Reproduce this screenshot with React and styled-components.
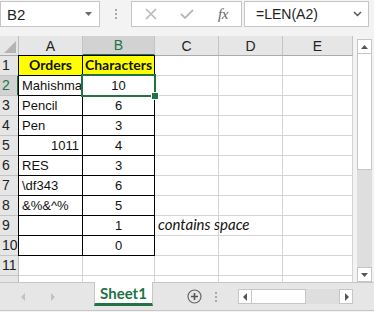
import React from "react";
import styled, { createGlobalStyle, css } from "styled-components";

const GREEN = "#217346";

const GlobalStyle = createGlobalStyle`
  html, body { margin: 0; padding: 0; }
  body {
    background: #f3f3f3;
    font-family: "Liberation Sans", Arial, sans-serif;
  }
`;

const Window = styled.div`
  width: 374px;
  height: 312px;
  overflow: hidden;
  display: flex;
  flex-direction: column;
  background: #f3f3f3;
`;

/* ---------- formula bar ---------- */
const FormulaBar = styled.div`
  height: 36px;
  box-sizing: border-box;
  padding-top: 1px;
  display: flex;
  align-items: flex-start;
`;

const Field = styled.div`
  height: 26px;
  box-sizing: border-box;
  border: 1px solid #c6c6c6;
  background: #fff;
  display: flex;
  align-items: center;
`;

const NameBox = styled(Field)`
  width: 100px;
  padding: 0 6px 0 6px;
  justify-content: space-between;
  font-size: 15px;
  color: #222;
`;

const Grip = styled.div`
  width: 31px;
  height: 26px;
  display: flex;
  flex-direction: column;
  align-items: center;
  justify-content: center;
  gap: 2px;
  span {
    width: 2px;
    height: 2px;
    background: #a8a8a8;
  }
`;

const EditBox = styled(Field)`
  width: 111px;
  padding-left: 12px;
  gap: 22px;
`;

const IconSlot = styled.div`
  width: 14px;
  display: flex;
  justify-content: center;
  align-items: center;
`;

const Fx = styled.span`
  font-family: "Liberation Serif", serif;
  font-style: italic;
  font-size: 15px;
  color: #666;
  letter-spacing: -0.5px;
`;

const FormulaInput = styled(Field)`
  flex: 1;
  margin: 0 5px 0 2px;
  padding: 0 6px 0 11px;
  justify-content: space-between;
  font-size: 14px;
  color: #222;
`;

/* ---------- sheet ---------- */
const SheetArea = styled.div`
  height: 246px;
  display: flex;
`;

const Grid = styled.div`
  width: 353px;
  height: 246px;
  overflow: hidden;
  background: #fff;
  display: grid;
  grid-template-columns: 19px 64px 72px 64px 64px 70px;
  grid-auto-rows: 20px;
`;

const Corner = styled.div`
  background: #e6e6e6;
  border-right: 1px solid #bcbcbc;
  border-bottom: 1px solid #ababab;
  box-sizing: border-box;
  display: flex;
  align-items: flex-end;
  justify-content: flex-end;
  padding: 0 2px 2px 0;
`;

const ColHead = styled.div`
  box-sizing: border-box;
  background: ${(p) => (p.$active ? "#d2d2d2" : "#e6e6e6")};
  border-right: 1px solid #c4c4c4;
  border-bottom: ${(p) => (p.$active ? `2px solid ${GREEN}` : "1px solid #ababab")};
  color: ${(p) => (p.$active ? GREEN : "#222")};
  display: flex;
  align-items: center;
  justify-content: center;
  font-size: 14px;
`;

const RowHead = styled.div`
  box-sizing: border-box;
  background: ${(p) => (p.$active ? "#d2d2d2" : "#e6e6e6")};
  border-right: ${(p) => (p.$active ? `2px solid ${GREEN}` : "1px solid #bcbcbc")};
  border-bottom: 1px solid #c4c4c4;
  color: ${(p) => (p.$active ? GREEN : "#222")};
  display: flex;
  align-items: flex-end;
  padding: 0 0 2px 2px;
  font-size: 14px;
`;

const justify = { left: "flex-start", center: "center", right: "flex-end" };

const Cell = styled.div`
  box-sizing: border-box;
  position: relative;
  border-right: 1px solid #d4d4d4;
  border-bottom: 1px solid #d4d4d4;
  background: ${(p) => p.$fill || "#fff"};
  display: flex;
  align-items: flex-end;
  justify-content: ${(p) => justify[p.$align || "left"]};
  padding: 0 3px 2px;
  font-size: 13px;
  color: #111;
  white-space: nowrap;
  ${(p) =>
    p.$boxed &&
    css`
      border: 1px solid #000;
      margin: -1px 0 0 -1px;
    `}
  ${(p) =>
    p.$bold &&
    css`
      font-family: Lato, "Liberation Sans", sans-serif;
      font-weight: 700;
      font-size: 14px;
    `}
  ${(p) =>
    p.$note &&
    css`
      z-index: 1;
      background: transparent;
      font-family: Lato, "Liberation Sans", sans-serif;
      font-style: italic;
      font-size: 15px;
    `}
  ${(p) =>
    p.$selected &&
    css`
      z-index: 2;
      &::after {
        content: "";
        position: absolute;
        top: -2px;
        left: -2px;
        right: -2px;
        bottom: -2px;
        border: 2px solid ${GREEN};
      }
    `}
`;

const FillHandle = styled.span`
  position: absolute;
  right: -5px;
  bottom: -5px;
  width: 6px;
  height: 6px;
  background: ${GREEN};
  border: 1px solid #fff;
  z-index: 3;
`;

const Gutter = styled.div`
  width: 4px;
`;

const VScroll = styled.div`
  width: 15px;
  margin-top: 3px;
  display: flex;
  flex-direction: column;
  background: #dedede;
`;

const ScrollBtn = styled.div`
  box-sizing: border-box;
  width: ${(p) => (p.$h ? "14px" : "15px")};
  height: 15px;
  background: #fff;
  border: 1px solid #c6c6c6;
  display: flex;
  align-items: center;
  justify-content: center;
`;

const VThumb = styled.div`
  height: 116px;
  box-sizing: border-box;
  background: #fff;
  border: 1px solid #c6c6c6;
  border-top: none;
`;

const VTrack = styled.div`
  flex: 1;
`;

/* ---------- tab bar ---------- */
const TabBar = styled.div`
  height: 29px;
  box-sizing: border-box;
  border-top: 1px solid #c6c6c6;
  border-bottom: 1px solid #c6c6c6;
  background: #e6e6e6;
  display: flex;
  align-items: flex-start;
`;

const NavArrows = styled.div`
  width: 94px;
  height: 27px;
  display: flex;
  align-items: center;
  padding-left: 20px;
  box-sizing: border-box;
  gap: 22px;
`;

const Tab = styled.div`
  width: 59px;
  height: 24px;
  margin-top: -1px;
  box-sizing: border-box;
  background: #fff;
  border-left: 1px solid #c6c6c6;
  border-right: 1px solid #c6c6c6;
  border-bottom: 3px solid ${GREEN};
  display: flex;
  align-items: center;
  justify-content: center;
  font-family: Lato, "Liberation Sans", sans-serif;
  font-weight: 700;
  font-size: 15px;
  color: ${GREEN};
`;

const TabTools = styled.div`
  display: flex;
  align-items: center;
  height: 27px;
  padding-left: 34px;
`;

const GripH = styled(Grip)`
  width: 16px;
  margin: 0 14px 0 6px;
  height: 27px;
`;

const HScroll = styled.div`
  width: 115px;
  height: 15px;
  display: flex;
  background: #dedede;
`;

const HThumb = styled.div`
  width: 54px;
  box-sizing: border-box;
  background: #fff;
  border: 1px solid #c6c6c6;
  border-left: none;
`;

/* ---------- icons ---------- */
const Tri = ({ dir, color = "#555", size = 7 }) => {
  const pts = {
    up: "0,6 7,6 3.5,2",
    down: "0,2 7,2 3.5,6",
    left: "5,0 5,8 1,4",
    right: "2,0 2,8 6,4",
  }[dir];
  return (
    <svg width={size} height={8} viewBox="0 0 7 8">
      <polygon points={pts} fill={color} />
    </svg>
  );
};

const XIcon = () => (
  <svg width="12" height="12" viewBox="0 0 12 12">
    <path d="M1 1 L11 11 M11 1 L1 11" stroke="#b8b8b8" strokeWidth="1.6" />
  </svg>
);

const CheckIcon = () => (
  <svg width="14" height="12" viewBox="0 0 14 12">
    <path d="M1 6 L5 10 L13 2" stroke="#b8b8b8" strokeWidth="1.8" fill="none" />
  </svg>
);

const Chevron = () => (
  <svg width="9" height="6" viewBox="0 0 9 6">
    <path d="M1 1 L4.5 4.5 L8 1" stroke="#555" strokeWidth="1.5" fill="none" />
  </svg>
);

const PlusCircle = () => (
  <svg width="15" height="15" viewBox="0 0 15 15">
    <circle cx="7.5" cy="7.5" r="6.5" stroke="#666" strokeWidth="1.2" fill="none" />
    <path d="M7.5 4 V11 M4 7.5 H11" stroke="#555" strokeWidth="1.6" />
  </svg>
);

const CornerMark = () => (
  <svg width="12" height="12" viewBox="0 0 12 12">
    <polygon points="12,0 12,12 0,12" fill="#b4b4b4" />
  </svg>
);

/* ---------- data ---------- */
const rows = [
  { a: "Orders", b: "Characters", head: true },
  { a: "Mahishma", b: "10" },
  { a: "Pencil", b: "6" },
  { a: "Pen", b: "3" },
  { a: "1011", b: "4", aRight: true },
  { a: "RES", b: "3" },
  { a: "\\df343", b: "6" },
  { a: "&%&^%", b: "5" },
  { a: "", b: "1", c: "contains space" },
  { a: "", b: "0" },
];

const cols = ["A", "B", "C", "D", "E"];

export default function App() {
  return (
    <Window>
      <GlobalStyle />
      <FormulaBar>
        <NameBox>
          <span>B2</span>
          <Tri dir="down" color="#6a6a6a" size={9} />
        </NameBox>
        <Grip>
          <span />
          <span />
          <span />
        </Grip>
        <EditBox>
          <IconSlot>
            <XIcon />
          </IconSlot>
          <IconSlot>
            <CheckIcon />
          </IconSlot>
          <IconSlot>
            <Fx>fx</Fx>
          </IconSlot>
        </EditBox>
        <FormulaInput>
          <span>=LEN(A2)</span>
          <Chevron />
        </FormulaInput>
      </FormulaBar>

      <SheetArea>
        <Grid>
          <Corner>
            <CornerMark />
          </Corner>
          {cols.map((c) => (
            <ColHead key={c} $active={c === "B"}>
              {c}
            </ColHead>
          ))}

          {rows.map((r, i) => (
            <React.Fragment key={i}>
              <RowHead $active={i === 1}>{i + 1}</RowHead>
              <Cell
                $boxed
                $fill={r.head ? "#ffff00" : undefined}
                $bold={r.head}
                $align={r.head ? "center" : r.aRight ? "right" : "left"}
              >
                {r.a}
              </Cell>
              <Cell
                $boxed
                $fill={r.head ? "#ffff00" : undefined}
                $bold={r.head}
                $align="center"
                $selected={i === 1}
              >
                {r.b}
                {i === 1 && <FillHandle />}
              </Cell>
              <Cell $note={!!r.c}>{r.c}</Cell>
              <Cell />
              <Cell />
            </React.Fragment>
          ))}

          {["11", ""].map((n, k) => (
            <React.Fragment key={k}>
              <RowHead>{n}</RowHead>
              {cols.map((c) => (
                <Cell key={c} />
              ))}
            </React.Fragment>
          ))}
        </Grid>
        <Gutter />
        <VScroll>
          <ScrollBtn>
            <Tri dir="up" />
          </ScrollBtn>
          <VThumb />
          <VTrack />
          <ScrollBtn>
            <Tri dir="down" />
          </ScrollBtn>
        </VScroll>
      </SheetArea>

      <TabBar>
        <NavArrows>
          <Tri dir="left" color="#c2c2c2" />
          <Tri dir="right" color="#c2c2c2" />
        </NavArrows>
        <Tab>Sheet1</Tab>
        <TabTools>
          <PlusCircle />
          <GripH>
            <span />
            <span />
            <span />
          </GripH>
          <HScroll>
            <ScrollBtn $h>
              <Tri dir="left" />
            </ScrollBtn>
            <HThumb />
            <VTrack />
            <ScrollBtn $h>
              <Tri dir="right" />
            </ScrollBtn>
          </HScroll>
        </TabTools>
      </TabBar>
    </Window>
  );
}
